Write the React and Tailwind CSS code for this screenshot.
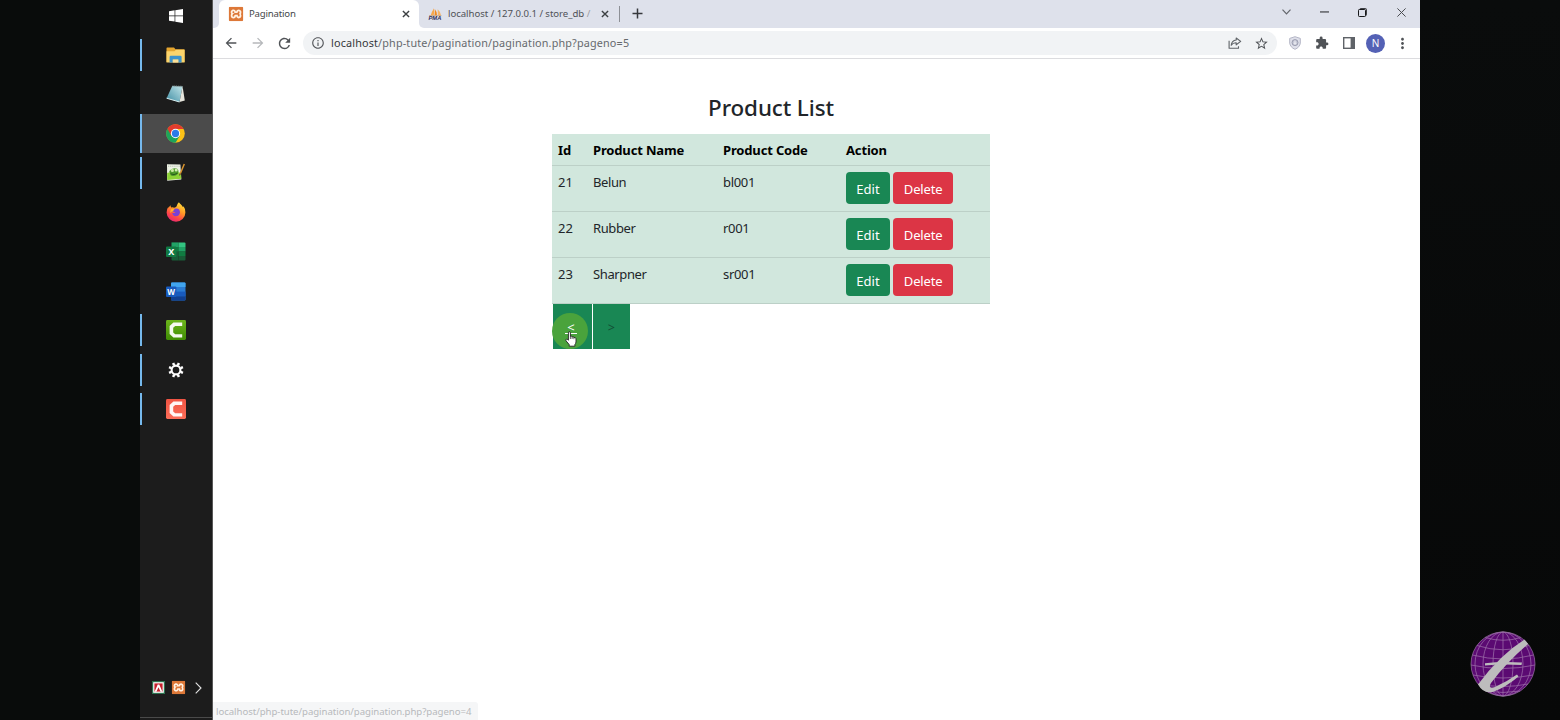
import React from "react";
import { MdArrowBack, MdArrowForward, MdRefresh, MdInfoOutline, MdStarBorder, MdExtension, MdMoreVert } from "react-icons/md";
import { SiXampp } from "react-icons/si";

const WindowsIcon = () => (
  <svg width="14" height="14" viewBox="0 0 14 14" fill="#fff">
    <path d="M0 2.2 5.6 1.3V6.6H0zM6.3 1.2 14 0V6.6H6.3zM0 7.3H5.6V12.6L0 11.8zM6.3 7.3H14V14L6.3 12.8z" />
  </svg>
);

const FolderIcon = () => (
  <svg width="19" height="16" viewBox="0 0 19 16">
    <path d="M.5 1.2Q.5.5 1.2.5H8l1.5 1.7H18q.6 0 .6.7V15H.5z" fill="#e5a52f" />
    <path d="M.5 4.2H8.4L10 2.8h8.6V15.4H.5z" fill="#fbd46c" />
    <path d="M3.6 15.6V10q0-1.2 1.2-1.2h9.6q1.2 0 1.2 1.2v5.6h-3.3v-3H6.8v3z" fill="#3d93cc" />
    <path d="M6.8 12.6h5.5v3H6.8z" fill="#fbe09a" />
  </svg>
);

const NotebookIcon = () => (
  <svg width="19" height="18" viewBox="0 0 19 18">
    <defs>
      <linearGradient id="nb" x1="0" y1="1" x2="1" y2="0">
        <stop offset="0" stopColor="#3f8da3" />
        <stop offset="1" stopColor="#c3e6ea" />
      </linearGradient>
    </defs>
    <path d="M6.2 1 16.6 1.4 13.5 17 .6 13.2z" fill="url(#nb)" />
    <path d="M16.6 1.4 18.8 15.4 13.5 17z" fill="#e6e5dc" />
    <path d="M.6 13.2 13.5 17" stroke="#d9eef0" strokeWidth="1" />
    <path d="M6.5 1.1 16.4 1.6" stroke="#8fa3a5" strokeWidth="1.4" strokeDasharray="1 .8" />
  </svg>
);

const ChromeIcon = () => (
  <svg width="19" height="19" viewBox="0 0 48 48">
    <circle cx="24" cy="24" r="23.5" fill="#fbc116" />
    <path d="M24 24 3.6 12.2A23.5 23.5 0 0 0 24 47.5L34.4 30z" fill="#1da55b" />
    <path d="M3.6 12.2A23.5 23.5 0 0 1 44.4 12.5H24L13.6 30z" fill="#e23b2e" />
    <circle cx="24" cy="24" r="11.7" fill="#fff" />
    <circle cx="24" cy="24" r="9.2" fill="#2c7be8" />
  </svg>
);

const NotepadPlusIcon = () => (
  <svg width="19" height="19" viewBox="0 0 19 19">
    <path d="M1 1.2 14.4 1.6 15.3 16.6 1.2 17.8z" fill="#eef3e6" />
    <path d="M1.2 10 Q8 7 15 10L15.3 15.8 1.2 17z" fill="#8ed337" />
    <path d="M3.2 8.3Q6 4.2 10.8 5.6 13.6 7.2 11.8 11 9 14.2 4.8 12.4z" fill="#4d9a2c" />
    <circle cx="6.4" cy="7.4" r="1.6" fill="#c9e9a0" />
    <circle cx="10.2" cy="7" r="1.5" fill="#d5efb2" />
    <path d="M4.5 10.8Q8 12.6 11.5 10.3" stroke="#234e18" fill="none" strokeWidth=".9" />
    <path d="M2 3.2H13.8" stroke="#a7afa4" strokeWidth=".8" strokeDasharray="1.2 .9" />
    <path d="M18.3 1 13.8 11.8" stroke="#d9942e" strokeWidth="1.5" />
    <path d="M14.3 10.6 13.6 12.4" stroke="#433" strokeWidth="1" />
  </svg>
);

const FirefoxIcon = () => (
  <svg width="20" height="20" viewBox="0 0 20 20">
    <defs>
      <linearGradient id="ff" x1=".8" y1="0" x2=".25" y2="1">
        <stop offset="0" stopColor="#ffe33d" />
        <stop offset=".4" stopColor="#ff9a25" />
        <stop offset=".72" stopColor="#ff4748" />
        <stop offset="1" stopColor="#e32376" />
      </linearGradient>
    </defs>
    <path d="M12.9.3C14 2 16 3.2 17 5.3q.5-.5.4-1.2 2 2.7 2 6.3A9.4 9.4 0 0 1 10 19.7 9.4 9.4 0 0 1 .6 10.5Q.6 7 2.4 4.8L2.7 6q.5-1.8 1.9-2.8-.1 1.2.6 2.2Q7 5 8.2 5.8 10.7 5 10.8 3.7 11.4 1.6 12.9.3z" fill="url(#ff)" />
    <path d="M8.8 6.7Q13.8 5.6 14 10.3 13.5 14.2 9.9 14.2 6.5 13.9 6.2 10.7q1.7.8 3.4-.5-1.5-.6-3.2-.4Q6 8.4 8.8 6.7z" fill="#7941d5" />
    <path d="M5 7.2Q6.4 6.6 8.6 7.3 7.4 8 7.3 9.2 5 9.2 4 11z" fill="#ffb52a" />
  </svg>
);

const ExcelIcon = () => (
  <svg width="20" height="19" viewBox="0 0 20 19">
    <path d="M5.5.4H12.5V9.5H5.5z" fill="#21a366" />
    <path d="M12.5.4h6q1 0 1 1V5h-7z" fill="#33c481" />
    <path d="M12.5 5h7v4.6h-7z" fill="#21a366" />
    <path d="M5.5 5h7v4.6h-7z" fill="#107c41" />
    <path d="M5.5 9.6h7v9h-6q-1 0-1-1z" fill="#185c37" />
    <path d="M12.5 9.6h7V14h-7z" fill="#107c41" />
    <path d="M12.5 14h7v3.6q0 1-1 1h-6z" fill="#185c37" />
    <rect x="0" y="4.4" width="10.4" height="10.6" rx="1" fill="#117a43" />
    <text x="5.2" y="12.9" textAnchor="middle" fontSize="9" fontWeight="700" fontFamily="Noto Sans, sans-serif" fill="#fff">X</text>
  </svg>
);

const WordIcon = () => (
  <svg width="20" height="19" viewBox="0 0 20 19">
    <rect x="5" y=".4" width="14.5" height="18.2" rx="1" fill="#2b7cd3" />
    <path d="M5 1.4q0-1 1-1h12.5q1 0 1 1V5H5z" fill="#41a5ee" />
    <path d="M5 9.6h14.5v4.6H5z" fill="#185abd" />
    <path d="M5 14.2h14.5v3.4q0 1-1 1H6q-1 0-1-1z" fill="#103f91" />
    <rect x="0" y="4.4" width="10.4" height="10.6" rx="1" fill="#185abd" />
    <text x="5.2" y="12.6" textAnchor="middle" fontSize="8" fontWeight="700" fontFamily="Noto Sans, sans-serif" fill="#fff">W</text>
  </svg>
);

const CamtasiaIcon = ({ from, to }) => (
  <svg width="20" height="20" viewBox="0 0 20 20">
    <defs>
      <linearGradient id={"c" + from.slice(1)} x1="0" y1="0" x2="0" y2="1">
        <stop offset="0" stopColor={from} />
        <stop offset="1" stopColor={to} />
      </linearGradient>
    </defs>
    <rect width="20" height="20" rx="1.4" fill={"url(#c" + from.slice(1) + ")"} />
    <path d="M16.2 2.6V6H9.2L7.2 7.7V12.4L9.2 14.2H16.2V17.5H7.4L3.6 14V6L7.4 2.6z" fill="#fff" opacity=".94" />
  </svg>
);

const GearIcon = () => (
  <svg width="16" height="16" viewBox="0 0 16 16" fill="none" stroke="#fff">
    <circle cx="8" cy="8" r="4.4" strokeWidth="2.1" />
    <g strokeWidth="2.5">
      {[22.5, 67.5, 112.5, 157.5, 202.5, 247.5, 292.5, 337.5].map((a) => (
        <path key={a} d="M8 3V.5" transform={`rotate(${a} 8 8)`} />
      ))}
    </g>
  </svg>
);

const XamppIcon = ({ className }) => (
  <span className={`flex items-center justify-center bg-[#fff1e2] ${className}`}>
    <SiXampp className="h-full w-full scale-105 text-[#dd7838]" />
  </span>
);

const AvastIcon = () => (
  <svg width="13" height="13" viewBox="0 0 13 13">
    <rect width="13" height="13" fill="#2d7350" />
    <rect x="1.2" y="1.2" width="10.6" height="10.6" fill="#fff" />
    <path d="M2.4 2.4H10.6V10.6H2.4z" fill="#c5202c" />
    <path d="M5.7 3.6H7.3L10.4 10.8H8.6L6.5 6.3 4.4 10.8H2.6z" fill="#fff" />
  </svg>
);

const PmaIcon = () => (
  <svg width="14" height="12" viewBox="0 0 14 12">
    <path d="M6 .2Q3.6 3.8 2.8 7.2L6 6.8z" fill="#f6a84d" />
    <path d="M6.8 1Q9 3.6 9 7.2L6.6 7z" fill="#f08a1d" />
    <path d="M9.7 1.2Q12.4 3.6 13 7.2L9.8 7z" fill="#f5b568" />
    <path d="M1 7.6H13.4" stroke="#c8935b" strokeWidth=".7" />
    <text x="0.4" y="11.6" fontSize="5.8" fontWeight="700" fontStyle="italic" fontFamily="Liberation Sans, sans-serif" fill="#2f2e58" textLength="13">PMA</text>
  </svg>
);

const CloseIcon = () => (
  <svg width="8" height="8" viewBox="0 0 8 8" stroke="#3c4043" strokeWidth="1.4">
    <path d="M.9.9 7.1 7.1M7.1.9.9 7.1" />
  </svg>
);

const TASKS = [
  { icon: <WindowsIcon /> },
  { icon: <FolderIcon />, open: true },
  { icon: <NotebookIcon /> },
  { icon: <ChromeIcon />, active: true },
  { icon: <NotepadPlusIcon />, open: true },
  { icon: <FirefoxIcon /> },
  { icon: <ExcelIcon /> },
  { icon: <WordIcon /> },
  { icon: <CamtasiaIcon from="#6cb51c" to="#3f8d04" />, open: true },
  { icon: <GearIcon />, open: true },
  { icon: <CamtasiaIcon from="#ef5443" to="#fb6d58" />, open: true },
];

function Taskbar() {
  return (
    <aside className="flex w-[73px] shrink-0 flex-col border-r border-[#575757] bg-[#1c1c1c]">
      <div className="-mt-[4.4px] flex flex-col">
        {TASKS.map((t, i) => (
          <div key={i} className={`flex h-[39.4px] items-center ${t.active ? "bg-[#4b4b4b]" : ""}`}>
            <span className={`w-[2px] shrink-0 ${t.active ? "h-full bg-[#76b9ed]" : t.open ? "h-8 bg-[#76b9ed]" : "h-0"}`} />
            <span className={`flex flex-1 justify-center pr-[2.5px] ${i === 0 ? "pt-[2px]" : ""}`}>{t.icon}</span>
          </div>
        ))}
      </div>
      <div className="mt-auto flex items-center pb-[23px] pl-3">
        <AvastIcon />
        <XamppIcon className="ml-[7px] h-[13px] w-[13px]" />
        <svg className="ml-[10px]" width="7" height="12" viewBox="0 0 7 12" fill="none" stroke="#e2e2e2" strokeWidth="1.1">
          <path d="M.7.7 6 6 .7 11.3" />
        </svg>
      </div>
      <div className="mb-[2px] h-px bg-[#4a4a4a]" />
    </aside>
  );
}

function TabStrip() {
  return (
    <div className="flex h-7 bg-[#dee1eb]">
      <div className="flex w-[6px] shrink-0 bg-white">
        <div className="h-full w-full rounded-br-[5px] bg-[#dee1eb]" />
      </div>
      <div className="flex w-[200px] shrink-0 items-center rounded-t-[6px] bg-white pl-[10px] pr-[9px] pb-[0.5px]">
        <XamppIcon className="h-[14px] w-[14px]" />
        <span className="ml-[6px] flex-1 text-[9.6px] tracking-[-0.02em] text-[#45474a]">Pagination</span>
        <CloseIcon />
      </div>
      <div className="flex w-[6px] shrink-0 bg-white">
        <div className="h-full w-full rounded-bl-[5px] bg-[#dee1eb]" />
      </div>
      <div className="flex w-[194px] shrink-0 items-center border-r border-transparent pl-[3px] pr-[9px] pb-[0.5px]">
        <PmaIcon />
        <span className="ml-[6px] flex-1 whitespace-nowrap text-[9.6px] tracking-[-0.004em] text-[#505257]">
          localhost / 127.0.0.1 / store_db <span className="text-[#9a9da3]">/</span>
        </span>
        <CloseIcon />
      </div>
      <div className="mt-[6px] h-4 w-px shrink-0 bg-[#8d9096]" />
      <svg className="ml-[12px] mt-[8px] shrink-0" width="11" height="11" viewBox="0 0 11 11" stroke="#36383c" strokeWidth="1.5">
        <path d="M5.5.5v10M.5 5.5h10" />
      </svg>
      <div className="ml-auto flex items-center pb-[4px] pr-[14px]">
        <svg width="9" height="6" viewBox="0 0 9 6" fill="none" stroke="#62656b" strokeWidth="1.2">
          <path d="M.5.7 4.5 4.8 8.5.7" />
        </svg>
        <svg className="ml-[29px]" width="9" height="2" viewBox="0 0 9 2">
          <rect y=".4" width="9" height="1.1" fill="#303236" />
        </svg>
        <svg className="ml-[29px]" width="9" height="9" viewBox="0 0 9 9" fill="none" stroke="#17181a" strokeWidth="1">
          <rect x=".5" y="1.5" width="7" height="7" rx=".8" />
          <path d="M1.8 1.2Q2 .5 2.8.5H7.4Q8.5.5 8.5 1.5V6.8Q8.5 7.4 7.8 7.6" strokeWidth=".8" />
        </svg>
        <svg className="ml-[30px]" width="9" height="9" viewBox="0 0 9 9" stroke="#4a4c51" strokeWidth="1">
          <path d="M.4.4 8.6 8.6M8.6.4.4 8.6" />
        </svg>
      </div>
    </div>
  );
}

function Toolbar() {
  return (
    <div className="flex h-[31px] items-center border-b border-[#dcdcdf] bg-white pl-[10px] pr-[9px]">
      <MdArrowBack size={16} className="shrink-0 text-[#505357]" />
      <MdArrowForward size={16} className="ml-[11px] shrink-0 text-[#b6b8bb]" />
      <MdRefresh size={17} className="ml-[10px] shrink-0 text-[#505357]" />
      <div className="ml-[10px] flex h-6 flex-1 items-center rounded-full bg-[#f1f3f5] pl-[8px] pr-[8px]">
        <MdInfoOutline size={14} className="text-[#55585c]" />
        <span className="ml-[6px] flex-1 text-[10.8px] tracking-[0.015em] text-[#66696d]">
          <span className="text-[#35373a]">localhost</span>/php-tute/pagination/pagination.php?pageno=5
        </span>
        <svg width="14" height="12" viewBox="0 0 14 12" fill="none" stroke="#5f6368" strokeWidth="1.1" strokeLinejoin="round">
          <path d="M1.1 3.8V11.2H10.5V9.3" />
          <path d="M8.2 1 12.7 4.4 8.2 7.8V5.8Q5 5.6 3.2 8.3 3.7 3.4 8.2 3z" />
        </svg>
        <MdStarBorder size={15} className="ml-[12px] text-[#505357]" />
      </div>
      <svg className="ml-[12px]" width="12" height="14" viewBox="0 0 12 14" fill="none">
        <path d="M6 .7 11.3 2.4V7Q10.8 11.3 6 13.3 1.2 11.3.7 7V2.4z" fill="#dfe0ea" stroke="#b4b6c6" strokeWidth="1" />
        <circle cx="6" cy="6.6" r="3" fill="#c4c6d4" stroke="#9597ac" strokeWidth=".9" />
        <path d="M6 4.5V8.8M4.6 7.2H7.4" stroke="#f0f0f6" strokeWidth=".9" />
      </svg>
      <MdExtension size={14} className="ml-[14px] text-[#505357]" />
      <svg className="ml-[14px]" width="12" height="12" viewBox="0 0 12 12">
        <rect x=".7" y=".7" width="10.6" height="10.6" fill="#fff" stroke="#5f6368" strokeWidth="1.4" />
        <path d="M7.6.7h3.7v10.6H7.6z" fill="#5f6368" />
      </svg>
      <div className="ml-[11px] flex h-[19px] w-[19px] items-center justify-center rounded-full bg-[#5461b5] text-[10px] text-white">N</div>
      <MdMoreVert size={17} className="ml-[9px] text-[#505357]" />
    </div>
  );
}

const PRODUCTS = [
  { id: 21, name: "Belun", code: "bl001" },
  { id: 22, name: "Rubber", code: "r001" },
  { id: 23, name: "Sharpner", code: "sr001" },
];

function ProductPage() {
  return (
    <main className="relative flex flex-1 flex-col bg-white pl-[339px] text-[#212529]">
      <div className="w-[438px]">
        <h2 className="mt-[33px] h-[42px] text-center text-[22.4px] font-medium leading-[31px] tracking-[-0.005em]">Product List</h2>
        <div className="bg-[#d1e7dd] text-[13px]">
          <div className="grid h-8 grid-cols-[35px_130px_123px_1fr] border-b border-[#bcd0c7] pl-[6px] pt-[7px] font-bold leading-[19px] tracking-[-0.012em] text-black">
            <span>Id</span>
            <span>Product Name</span>
            <span>Product Code</span>
            <span>Action</span>
          </div>
          {PRODUCTS.map((p) => (
            <div key={p.id} className="grid h-[46px] grid-cols-[35px_130px_123px_1fr] border-b border-[#bcd0c7] pl-[6px] pt-[7px] leading-[19px]">
              <span>{p.id}</span>
              <span className="tracking-[-0.03em]">{p.name}</span>
              <span className="tracking-[-0.025em]">{p.code}</span>
              <span className="-mt-px flex gap-[3px]">
                <button className="h-[32.4px] w-[44px] rounded-[4px] bg-[#198754] pt-[2px] text-white">Edit</button>
                <button className="h-[32.4px] w-[60.3px] rounded-[4px] bg-[#dc3545] pt-[2px] tracking-[-0.01em] text-white">Delete</button>
              </span>
            </div>
          ))}
        </div>
        <div className="flex gap-px pl-px text-[13px]">
          <div className="relative flex h-[45px] w-[39px] items-center justify-center bg-[#198754] text-white">
            <span className="absolute left-[-1px] top-[9px] h-9 w-9 rounded-full bg-[#4aa33c]" />
            <span className="relative mr-[3px] mt-[3px] border-b border-white px-[2px] leading-[11px]">&lt;</span>
            <svg className="absolute left-[12px] top-[27px]" width="12" height="16" viewBox="0 0 12 16">
              <path d="M3.4 9.2V1.8Q3.5.7 4.4.7T5.4 1.8V5.4Q6.6 4.8 7.1 5.8 8.3 5.3 8.9 6.4 10.8 6 11 7.8V11Q10.7 12.9 9.9 13.5V15.2H4.2V13.6L1 9.8Q.4 8.6 1.4 8.2 2.3 8 3.4 9.2z" fill="#fff" stroke="#222" strokeWidth=".9" />
              <path d="M5.4 5.4V8M7.1 5.8V8M8.9 6.4V8.2" stroke="#222" strokeWidth=".7" />
            </svg>
          </div>
          <div className="flex h-[45px] w-[36.5px] items-center justify-center bg-[#198754] pt-[4px] text-[12.5px] text-[#124f34]">&gt;</div>
        </div>
      </div>
      <div className="absolute bottom-0 left-0 flex h-[18px] w-[265px] items-center rounded-tr-[3px] bg-[#f5f6f7] pl-[3px] pt-[2px] text-[9.6px] tracking-[-0.004em] text-[#b7b9bc]">
        localhost/php-tute/pagination/pagination.php?pageno=4
      </div>
    </main>
  );
}

const GlobeLogo = () => (
  <svg width="66" height="66" viewBox="0 0 66 66" fill="none">
    <circle cx="33" cy="33" r="32" fill="#5b0a72" />
    <g stroke="#a880b4" strokeWidth=".8" opacity=".8">
      <circle cx="33" cy="33" r="32" />
      <ellipse cx="33" cy="33" rx="10" ry="32" />
      <ellipse cx="33" cy="33" rx="20" ry="32" />
      <ellipse cx="33" cy="33" rx="28" ry="32" />
      <path d="M33 1V65M15 6.5Q33 12 51 6.5M7 14.5Q33 23 59 14.5M2.5 24Q33 32 63.5 24M1 34Q33 41 65 34M3 44Q33 50 63 44M8 53Q33 58 58 53M16 60Q33 63 50 60" />
    </g>
    <path d="M54.5 8.6 58.2 13Q38 30 21 52 17.5 58.4 25 56 37 50.5 47 43.4L48.5 45.4Q36 56 24 60.4 14 64 8 53.5 30 24 54.5 8.6z" fill="#bdbcbd" />
    <path d="M15 32.3Q32 30 52 31.5L51.5 34Q32 32.8 15 34.5z" fill="#bdbcbd" />
  </svg>
);

export default function App() {
  return (
    <div className="flex h-[720px] w-[1560px] overflow-hidden bg-[#090c0b] pl-[140px] font-['Noto_Sans',sans-serif]">
      <Taskbar />
      <div className="flex w-[1207px] shrink-0 flex-col">
        <TabStrip />
        <Toolbar />
        <ProductPage />
      </div>
      <div className="flex flex-1 flex-col items-start justify-end bg-linear-to-b from-[#0a0c0c] to-[#070808] pb-[23px] pl-[50px]">
        <GlobeLogo />
      </div>
    </div>
  );
}
